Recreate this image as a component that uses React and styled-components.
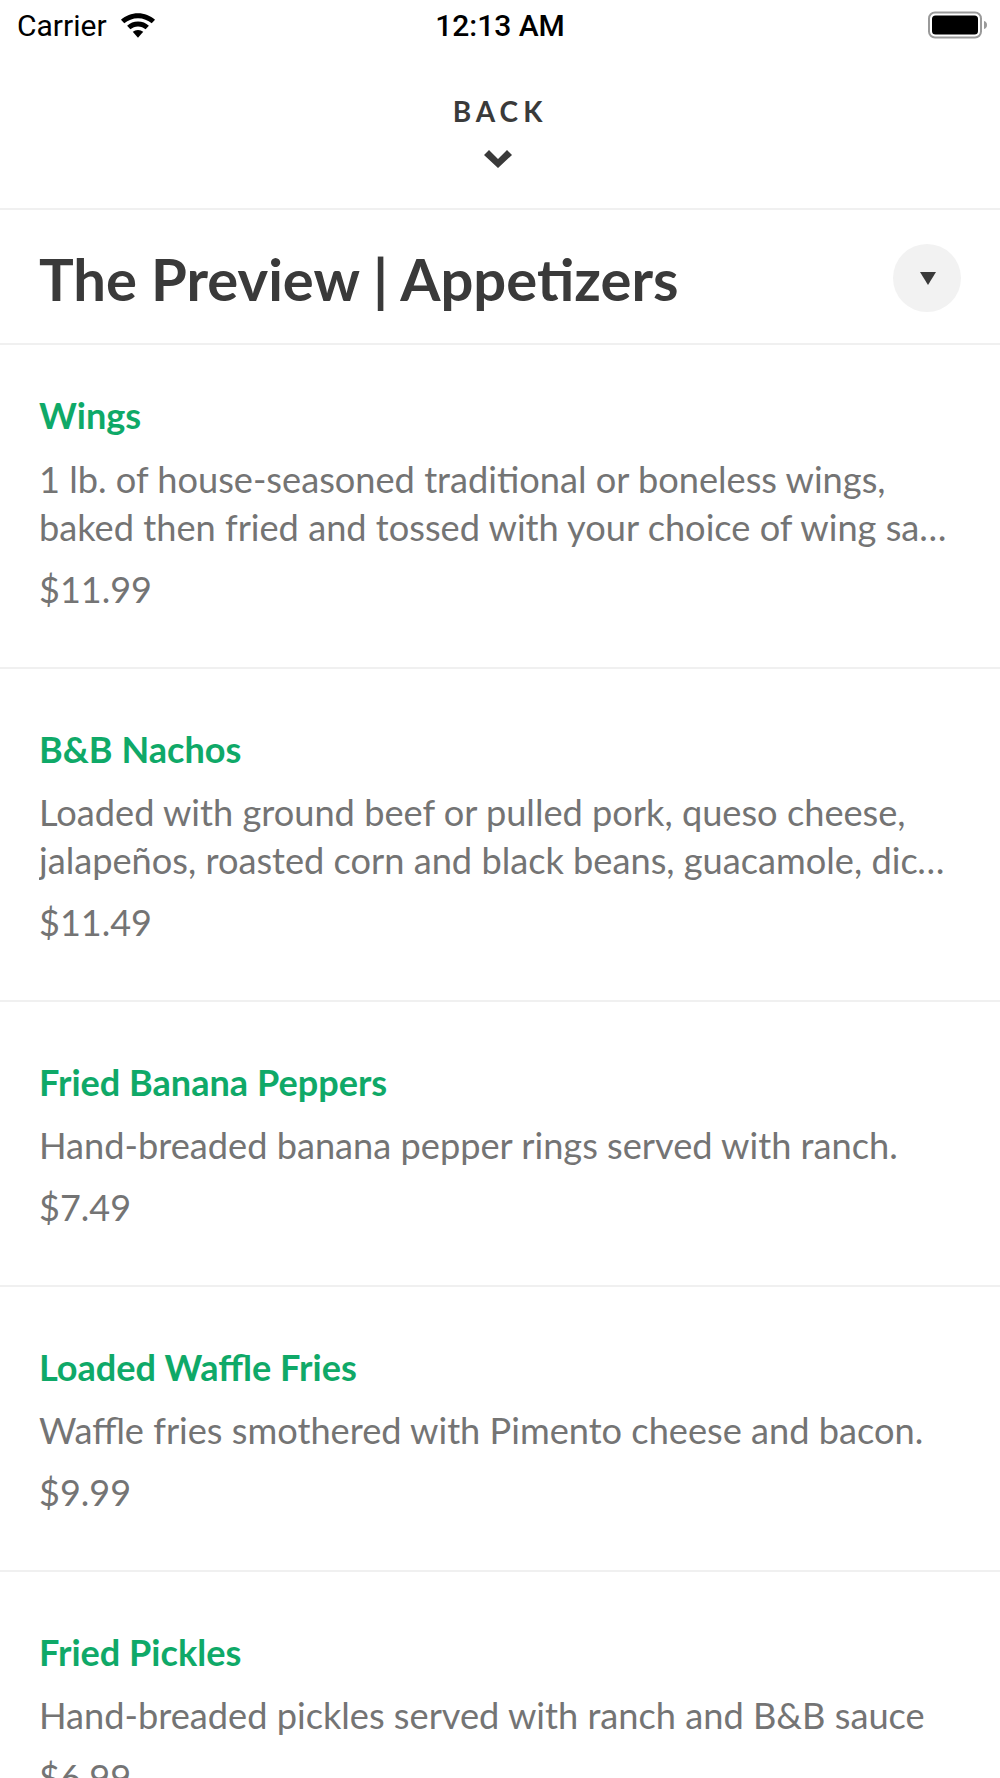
import React from "react";
import styled, { createGlobalStyle } from "styled-components";

const Global = createGlobalStyle`
  html, body { margin: 0; padding: 0; background: #fff; }
  body { font-family: Lato, "Open Sans", sans-serif; height: 1778px; overflow: hidden; }
`;

const Page = styled.div`
  width: 1000px;
  height: 1778px;
  overflow: hidden;
  background: #fff;
  display: flex;
  flex-direction: column;
`;

const StatusBar = styled.div`
  height: 52px;
  flex: none;
  box-sizing: border-box;
  padding: 0 13px 2px 17px;
  display: grid;
  grid-template-columns: 1fr auto 1fr;
  align-items: center;
  color: #000;
  font-family: Roboto, "Liberation Sans", sans-serif;
`;

const StatusLeft = styled.div`
  display: flex;
  align-items: center;
  gap: 13px;
  font-size: 30px;
`;

const Clock = styled.div`
  font-size: 30px;
  font-weight: 500;
  margin-right: 4px;
`;

const StatusRight = styled.div`
  display: flex;
  justify-content: flex-end;
`;

const BackBar = styled.div`
  height: 158px;
  flex: none;
  display: flex;
  flex-direction: column;
  align-items: center;
  box-sizing: border-box;
  padding-top: 44px;
  border-bottom: 2px solid #f0f0f0;
`;

const BackLabel = styled.div`
  font-size: 28px;
  line-height: 30px;
  font-weight: 700;
  letter-spacing: 5px;
  color: #3a3a3a;
`;

const Chevron = styled.svg`
  margin: 24px 4px 0 0;
  display: block;
`;

const TitleBar = styled.div`
  height: 135px;
  flex: none;
  box-sizing: border-box;
  padding: 3px 39px 0 39px;
  display: flex;
  align-items: center;
  justify-content: space-between;
  border-bottom: 2px solid #f0f0f0;
`;

const Title = styled.h1`
  margin: 0;
  font-size: 58px;
  font-weight: 700;
  color: #3a3a3a;
`;

const DropButton = styled.div`
  width: 68px;
  height: 68px;
  padding-left: 2px;
  box-sizing: border-box;
  border-radius: 50%;
  background: #f2f2f2;
  display: flex;
  align-items: center;
  justify-content: center;
`;

const Item = styled.div`
  box-sizing: border-box;
  padding: ${p => (p.$first ? 48 : 58)}px 48px 0 39px;
  height: ${p => p.$h}px;
  flex: none;
  border-bottom: 2px solid #f0f0f0;
`;

const Name = styled.div`
  font-size: 36.1px;
  line-height: 44px;
  font-weight: 700;
  color: #0fa968;
`;

const Desc = styled.div`
  margin-top: ${p => (p.$first ? 18 : 17)}px;
`;

const DescLine = styled.div`
  font-size: 36.2px;
  line-height: 48px;
  color: #747474;
  white-space: nowrap;
  overflow: hidden;
  text-overflow: ellipsis;
`;

const Price = styled.div`
  margin-top: 14px;
  font-size: 36px;
  line-height: 48px;
  color: #747474;
`;

const items = [
  { n: "Wings", d: ["1 lb. of house-seasoned traditional or boneless wings,", "baked then fried and tossed with your choice of wing sauce and served with ranch"], p: "$11.99", h: 324, first: true },
  { n: "B&B Nachos", d: ["Loaded with ground beef or pulled pork, queso cheese,", "jalapeños, roasted corn and black beans, guacamole, diced tomatoes and sour cream"], p: "$11.49", h: 333 },
  { n: "Fried Banana Peppers", d: ["Hand-breaded banana pepper rings served with ranch."], p: "$7.49", h: 285 },
  { n: "Loaded Waffle Fries", d: ["Waffle fries smothered with Pimento cheese and bacon."], p: "$9.99", h: 285 },
  { n: "Fried Pickles", d: ["Hand-breaded pickles served with ranch and B&B sauce"], p: "$6.99", h: 285 },
];

export default function App() {
  return (
    <Page>
      <Global />
      <StatusBar>
        <StatusLeft>
          Carrier
          <svg width="36" height="27" viewBox="0 0 37 27">
            <path d="M18.5 1C11.800 1 5.800 3.500 1 7.700l3.400 3.600c3.800-3.300 8.700-5.300 14.100-5.300s10.300 2 14.100 5.300L36 7.700C31.200 3.500 25.200 1 18.500 1z" fill="#000"/>
            <path d="M18.500 9.500c-4.300 0-8.200 1.600-11.200 4.200l3.400 3.600c2.100-1.800 4.800-2.900 7.800-2.900s5.700 1.100 7.800 2.900l3.400-3.600c-3-2.600-6.900-4.200-11.200-4.200z" fill="#000"/>
            <path d="M18.500 18c-2.100 0-4 .8-5.400 2l5.400 6 5.400-6c-1.400-1.200-3.300-2-5.400-2z" fill="#000"/>
          </svg>
        </StatusLeft>
        <Clock>12:13 AM</Clock>
        <StatusRight>
          <svg width="59" height="28" viewBox="0 0 59 28">
            <rect x="1" y="1.500" width="52" height="25" rx="6" fill="none" stroke="#9a9a9a" strokeWidth="2"/>
            <rect x="4" y="4.500" width="46" height="19" rx="3.500" fill="#000"/>
            <path d="M56 10c2 .5 3 2 3 4s-1 3.500-3 4z" fill="#9a9a9a"/>
          </svg>
        </StatusRight>
      </StatusBar>
      <BackBar>
        <BackLabel>BACK</BackLabel>
        <Chevron width="28" height="18" viewBox="0 0 28 18">
          <path d="M5 0l9 9 9-9 5 5-14 13L0 5z" fill="#3a3a3a"/>
        </Chevron>
      </BackBar>
      <TitleBar>
        <Title>The Preview | Appetizers</Title>
        <DropButton>
          <svg width="18" height="13" viewBox="0 0 18 13"><path d="M1 0h16L9 13z" fill="#3a3a3a"/></svg>
        </DropButton>
      </TitleBar>
      {items.map(i => (
        <Item key={i.n} $h={i.h} $first={i.first}>
          <Name>{i.n}</Name>
          <Desc $first={i.first}>{i.d.map(l => <DescLine key={l}>{l}</DescLine>)}</Desc>
          <Price>{i.p}</Price>
        </Item>
      ))}
    </Page>
  );
}
